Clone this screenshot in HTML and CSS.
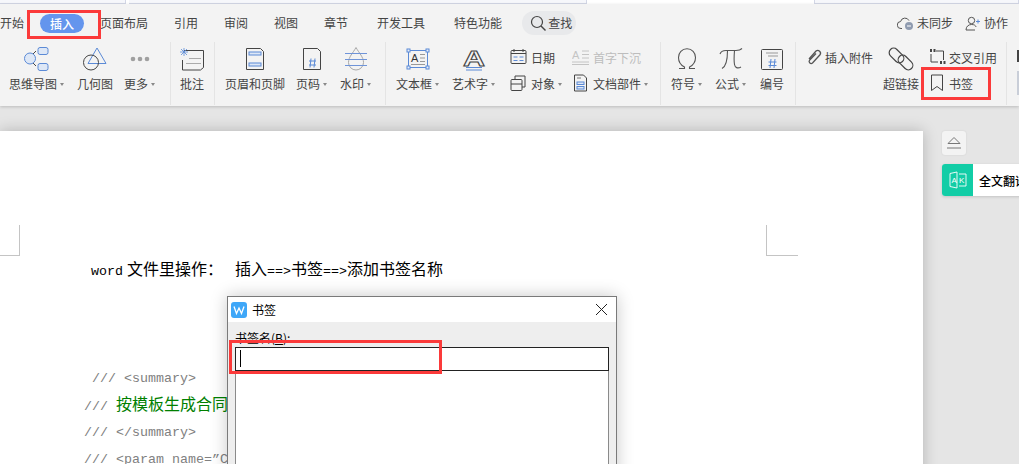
FILE: index.html
```html
<!DOCTYPE html>
<html lang="zh-CN">
  <head>
    <meta charset="utf-8" />
    <title>书签</title>
    <link rel="stylesheet" href="styles.css">
  </head>
  <body>
    <div class="app">
      <!-- tira de pestañas de arriba -->
      <div class="strip">
        <div class="strip-tab strip-a"></div>
        <div class="strip-tab strip-b"></div>
        <div class="strip-tab strip-c"></div>
      </div>

      <div class="ribbon">
        <div class="tabs">
          <span>开始</span>
          <span class="tab-on">插入</span>
          <span>页面布局</span>
          <span>引用</span>
          <span>审阅</span>
          <span>视图</span>
          <span>章节</span>
          <span class="tab-wide">开发工具</span>
          <span class="tab-wide">特色功能</span>
          <span class="search">
            <svg width="18" height="18" viewBox="0 0 18 18"><circle cx="8" cy="8" r="5.5" fill="none" stroke="#444" stroke-width="1.2"/><path d="M12 12l4.5 4.5" stroke="#444" stroke-width="1.4"/></svg>
            查找
          </span>
          <div class="tabs-right">
            <span class="tool">
              <svg width="17" height="15" viewBox="0 0 17 15"><path d="M5 12.5H4A3.5 3.5 0 0 1 3.6 5.5 4.5 4.5 0 0 1 12 4.6" fill="none" stroke="#555"/><circle cx="12" cy="10" r="4" fill="#8f9bb0"/><path d="M10 10h4" stroke="#fff"/></svg>
              未同步
            </span>
            <span class="tool">
              <svg width="16" height="15" viewBox="0 0 16 15"><circle cx="6.5" cy="4.5" r="3.2" fill="none" stroke="#555"/><path d="M1 14c0-3.5 2.5-5.5 5.5-5.5s4 1 4.6 2.4M1 14h9" fill="none" stroke="#555"/><path d="M11 5.5h4M13 3.5v4" stroke="#5b8ad6"/></svg>
              协作
            </span>
          </div>
        </div>

        <div class="groups">
          <div class="group g-first">
            <div class="big">
              <svg class="ico" width="26" height="26" viewBox="0 0 26 26"><path d="M8 9l4-4M8 16l4 4" stroke="#444"/><circle cx="6" cy="12.5" r="5.5" fill="#dde7f6" stroke="#5b8ad6"/><rect x="14" y="1.5" width="10" height="7" rx="2" fill="#dde7f6" stroke="#5b8ad6"/><rect x="14" y="17.5" width="10" height="7" rx="2" fill="#dde7f6" stroke="#5b8ad6"/></svg>
              <span class="lbl">思维导图<i class="arrow"></i></span>
            </div>
            <div class="big shape-btn">
              <svg class="ico" width="26" height="26" viewBox="0 0 26 26"><path d="M15 2l9 15.5H6z" fill="none" stroke="#5b8ad6"/><circle cx="9" cy="16.5" r="7.5" fill="none" stroke="#444"/></svg>
              <span class="lbl">几何图</span>
            </div>
            <div class="big">
              <svg class="ico" width="26" height="26" viewBox="0 0 26 26"><g fill="#a0a0a0"><circle cx="6" cy="13" r="2.3"/><circle cx="13" cy="13" r="2.3"/><circle cx="20" cy="13" r="2.3"/></g></svg>
              <span class="lbl">更多<i class="arrow"></i></span>
            </div>
          </div>

          <div class="group g-note">
            <div class="big">
              <svg class="ico" width="26" height="26" viewBox="0 0 26 26"><path d="M5 4.5h19.5v17l-3 2.5H3.5V14" fill="none" stroke="#444"/><path d="M10 12.5h12M7 17.5h15" stroke="#aaa"/><path d="M5 2v8M1 6h8M2 3l6 6M8 3L2 9" stroke="#5b8ad6" stroke-width=".8"/></svg>
              <span class="lbl">批注</span>
            </div>
          </div>

          <div class="group g-head">
            <div class="big">
              <svg class="ico" width="26" height="26" viewBox="0 0 26 26"><path d="M4.5 2.5h14l3 3v18h-17z" fill="none" stroke="#444"/><rect x="7" y="6" width="12" height="3" fill="#dde7f6" stroke="#5b8ad6"/><rect x="7" y="17" width="12" height="3" fill="#dde7f6" stroke="#5b8ad6"/></svg>
              <span class="lbl">页眉和页脚</span>
            </div>
            <div class="big">
              <svg class="ico" width="26" height="26" viewBox="0 0 26 26"><path d="M4.5 2.5h14l3 3v18h-17z" fill="none" stroke="#444"/><path d="M10 15h7M10 19h7M12 12.5l-1 9M16 12.5l-1 9" stroke="#5b8ad6"/></svg>
              <span class="lbl">页码<i class="arrow"></i></span>
            </div>
            <div class="big water-btn">
              <svg class="ico" width="26" height="26" viewBox="0 0 26 26"><path d="M13 1.5C10 7 5.5 11 5.5 16.5a7.5 7.5 0 0 0 15 0C20.500 11 16 7 13 1.5z" fill="none" stroke="#a8a8a8"/><path d="M2 7.500h22M2 13.500h22M2 19.500h22" stroke="#6f94d8"/></svg>
              <span class="lbl">水印<i class="arrow"></i></span>
            </div>
          </div>

          <div class="group g-text">
            <div class="big">
              <svg class="ico" width="26" height="26" viewBox="0 0 26 26"><rect x="3.500" y="4.500" width="19" height="17" fill="none" stroke="#5b8ad6"/><g fill="#e8eef9" stroke="#5b8ad6"><rect x="2" y="3" width="3" height="3"/><rect x="21" y="3" width="3" height="3"/><rect x="2" y="20" width="3" height="3"/><rect x="21" y="20" width="3" height="3"/></g><text x="6" y="16" class="svg-a">A</text><path d="M15 8.500h5M15 12h5M15 15.500h5M6 18.500h14" stroke="#999"/></svg>
              <span class="lbl">文本框<i class="arrow"></i></span>
            </div>
            <div class="big">
              <svg class="ico" width="26" height="26" viewBox="0 0 26 26"><text x="2" y="20" class="svg-art" textLength="22" lengthAdjust="spacingAndGlyphs">A</text><path d="M5 21.500h16M5 24h16" stroke="#5b8ad6"/></svg>
              <span class="lbl">艺术字<i class="arrow"></i></span>
            </div>
            <div class="small-grid">
              <div class="small">
                <svg width="20" height="18" viewBox="0 0 20 18"><rect x="1" y="2.500" width="15" height="13" rx="1" fill="none" stroke="#444"/><path d="M4 1v3M13 1v3M1 5.500h15" stroke="#444"/><path d="M3.500 9h4M9.500 9h4M3.500 12.500h4M9.500 12.500h4" stroke="#5b8ad6"/></svg>
                日期
              </div>
              <div class="small off">
                <svg width="20" height="18" viewBox="0 0 20 18"><text x="0" y="11" class="svg-off">A</text><path d="M10 3h7M10 6.500h7M10 10h7M0 14h17M0 16.500h17" stroke="#c4c4c4"/></svg>
                首字下沉
              </div>
              <div class="small">
                <svg width="20" height="18" viewBox="0 0 20 18"><path d="M5 5V2h10v11h-3" fill="none" stroke="#444"/><rect x="1" y="5.500" width="11" height="11" rx="1" fill="none" stroke="#444"/><path d="M1 10h11" stroke="#444"/></svg>
                <span>对象<i class="arrow"></i></span>
              </div>
              <div class="small">
                <svg width="20" height="18" viewBox="0 0 20 18"><path d="M2.500 1h9l3 3v13h-12z" fill="none" stroke="#444"/><rect x="5" y="8" width="7" height="2.500" fill="#dde7f6" stroke="#5b8ad6"/><rect x="5" y="12.500" width="7" height="2.500" fill="#dde7f6" stroke="#5b8ad6"/><path d="M5 4h4" stroke="#777"/></svg>
                <span>文档部件<i class="arrow"></i></span>
              </div>
            </div>
          </div>

          <div class="group g-sym">
            <div class="big">
              <svg class="ico" width="26" height="26" viewBox="0 0 26 26"><path d="M5 22.500h5.500v-1.500C6.500 19 4.500 15.500 4.500 11.500 4.500 6.500 8 2.800 13 2.800s8.500 3.700 8.500 8.700c0 4-2 7.500-6 9.500v1.500H21" fill="none" stroke="#555" stroke-width="1.100"/></svg>
              <span class="lbl">符号<i class="arrow"></i></span>
            </div>
            <div class="big">
              <svg class="ico ico-pi" width="26" height="26" viewBox="0 0 26 26"><path d="M2 8C3 5 5 4.500 8 4.500h10c2.500 0 4.500-.5 6-2M9.500 4.500C9.500 12 9 20 4 22.500M16.500 4.500c-.5 6-.5 11 0 14 .5 3 3 4.500 6.500 2.500" fill="none" stroke="#555" stroke-width="1.100"/></svg>
              <span class="lbl">公式<i class="arrow"></i></span>
            </div>
            <div class="big">
              <svg class="ico" width="26" height="26" viewBox="0 0 26 26"><rect x="2.500" y="3.500" width="21" height="20" rx="1" fill="none" stroke="#444"/><path d="M7 7h12M9 10h10" stroke="#999"/><path d="M9.500 16h8M9.500 19.500h8M12 13l-1 9M16 13l-1 9" stroke="#5b8ad6"/></svg>
              <span class="lbl">编号</span>
            </div>
          </div>

          <div class="group g-link">
            <div class="small attach">
              <svg width="20" height="18" viewBox="0 0 20 18"><path d="M4 11l7-8a2.800 2.800 0 0 1 4 3.800L7.500 15a2 2 0 0 1-3-2.600L11 5.500" fill="none" stroke="#555" stroke-width="1.300"/></svg>
              插入附件
            </div>
            <div class="big">
              <svg class="ico" width="26" height="26" viewBox="0 0 26 26"><g fill="none" stroke="#444" stroke-width="1.200"><rect x="0" y="5" width="17" height="9" rx="4.500" transform="rotate(45 8.500 9.500)"/><rect x="9" y="12" width="17" height="9" rx="4.500" transform="rotate(45 17.500 16.500)"/></g></svg>
              <span class="lbl">超链接</span>
            </div>
            <div class="link-col">
              <div class="small">
                <svg width="20" height="18" viewBox="0 0 20 18"><path d="M7 3h7.500v9M9 14H2V6" fill="none" stroke="#444"/><path d="M1 1h2v3H1zM4.500 1h2v3h-2zM11 13h2v3h-2zM14.500 13h2v3h-2z" fill="#444"/></svg>
                交叉引用
              </div>
              <div class="small">
                <svg width="20" height="18" viewBox="0 0 20 18"><path d="M2.500 1h11v15.500l-5.500-4-5.500 4z" fill="none" stroke="#444"/></svg>
                书签
              </div>
            </div>
          </div>

          <div class="group g-end">
            <i class="end-a"></i>
            <i class="end-b"></i>
          </div>
        </div>
      </div>

      <div class="workspace">
        <div class="page">
          <div class="marks">
            <div class="mark-left"></div>
            <div class="mark-right"></div>
          </div>
          <p class="line line-first"><span class="mono word">word</span>文件里操作：<span class="space"></span>插入<span class="mono">==&gt;</span>书签<span class="mono">==&gt;</span>添加书签名称</p>
          <p class="line code code-first mono">/// &lt;summary&gt;</p>
          <p class="line code code-green"><span class="mono">/// </span><span class="green">按模板生成合同</span></p>
          <p class="line code mono">/// &lt;/summary&gt;</p>
          <p class="line code mono">/// &lt;param name=”C</p>
        </div>
        <div class="side">
          <div class="collapse">
            <svg width="18" height="14" viewBox="0 0 18 14"><path d="M3 7.500L9 1.500l6 6z" fill="none" stroke="#777"/><path d="M2 12h14" stroke="#777"/></svg>
          </div>
          <div class="translate">
            <div class="translate-ico">
              <svg width="18" height="18" viewBox="0 0 18 18"><g fill="none" stroke="#fff" stroke-width=".9"><path d="M1 2.500l7-1.500v16l-7-1.500zM10 3h7v12h-7"/></g><text x="2.500" y="12" class="svg-tr">A</text><text x="10" y="12" class="svg-tr">K</text></svg>
            </div>
            <span>全文翻译</span>
          </div>
        </div>
      </div>

      <div class="dialog">
        <div class="dialog-title">
          <svg width="16" height="16" viewBox="0 0 16 16"><rect width="16" height="16" rx="3" fill="#3fa7f8"/><path d="M3 4.500l2.500 7L8 6l2.500 5.500 2.500-7" fill="none" stroke="#fff" stroke-width="1.300"/></svg>
          <span>书签</span>
          <svg class="dialog-close" width="13" height="13" viewBox="0 0 13 13"><path d="M1 1l11 11M12 1L1 12" stroke="#222"/></svg>
        </div>
        <div class="dialog-body">
          <div class="field-label">书签名(<u>B</u>):</div>
          <div class="field"><i class="caret"></i></div>
          <div class="list"></div>
        </div>
      </div>

      <!-- recuadros rojos de la captura -->
      <div class="red red-tab"></div>
      <div class="red red-mark"></div>
      <div class="red red-field"></div>
    </div>
  </body>
</html>
```

FILE: styles.css
```css
html,
body {
  margin: 0;
  height: 100%;
}
body {
  font-family: "Noto Sans CJK SC", "Liberation Sans", sans-serif;
  font-size: 12px;
  color: #444;
  background: #e5e5e5;
  overflow: hidden;
}
.app {
  position: relative;
  width: 1019px;
  height: 464px;
  overflow: hidden;
  display: flex;
  flex-direction: column;
}

/* tira superior */
.strip {
  height: 4px;
  display: flex;
  background: #fff;
  flex: none;
}
.strip-tab {
  background: #f6f7fb;
  border-bottom: 1px solid #d3d7e6;
  border-right: 1px solid #d3d7e6;
  height: 3px;
}
.strip-a {
  width: 125px;
}
.strip-b {
  width: 459px;
  margin-left: 3px;
}
.strip-c {
  width: 204px;
  margin-left: 227px;
  border-left: 1px solid #d3d7e6;
}

/* cinta */
.ribbon {
  flex: none;
  height: 102px;
  background: #f3f3f3;
  box-shadow: 0 1px 3px rgba(0, 0, 0, 0.18);
  position: relative;
  z-index: 2;
}
.tabs {
  height: 38px;
  display: flex;
  align-items: center;
  gap: 26px;
  font-size: 12px;
  line-height: 16px;
}
.tab-on {
  width: 44px;
  height: 19px;
  line-height: 19px;
  margin: 0 -10px;
  border-radius: 10px;
  background: #6495ed;
  color: #fff;
  text-align: center;
  font-weight: 500;
}
.tab-wide {
  margin-left: 3px;
}
.search {
  display: flex;
  align-items: center;
  width: 54px;
  height: 24px;
  margin-left: -6px;
  padding-left: 7px;
  box-sizing: border-box;
  border-radius: 12px;
  background: #e8e9eb;
  gap: 1px;
}
.tabs-right {
  display: flex;
  gap: 12px;
  margin-left: auto;
  padding-right: 11px;
}
.tool {
  display: flex;
  align-items: center;
  gap: 3px;
}

.groups {
  display: flex;
  height: 63px;
}
.group {
  display: flex;
  gap: 12px;
  padding: 4px 9px 0 9px;
  border-right: 1px solid #e4e4e4;
  flex: none;
  box-sizing: border-box;
}
.g-first {
  width: 171px;
}
.shape-btn {
  margin-left: 1px;
  margin-right: -1px;
}
.g-note {
  padding-left: 8px;
}
.g-head {
  width: 171px;
  padding-left: 10px;
  gap: 11px;
}
.water-btn {
  margin-left: 2px;
}
.g-text {
  width: 275px;
  padding-left: 10px;
  gap: 13px;
}
.g-sym {
  width: 135px;
  padding-left: 10px;
  gap: 13px;
}
.g-link {
  width: 211px;
  gap: 10px;
}
.g-end {
  border: 0;
  padding: 8px 0 0 10px;
  display: block;
}
.big {
  display: flex;
  flex-direction: column;
  align-items: center;
}
.ico {
  display: block;
  width: 26px;
  height: 26px;
  margin-bottom: 4px;
}
.lbl {
  line-height: 16px;
  white-space: nowrap;
}
.arrow {
  display: inline-block;
  width: 0;
  height: 0;
  margin-left: 3px;
  vertical-align: 3px;
  border-left: 2.5px solid transparent;
  border-right: 2.5px solid transparent;
  border-top: 3px solid #888;
}

.small-grid {
  display: grid;
  grid-template-columns: 62px auto;
  grid-auto-rows: 26px;
  margin: -2px 0 0 2px;
}
.link-col {
  display: grid;
  grid-auto-rows: 26px;
  margin-top: -2px;
}
.small {
  display: flex;
  align-items: center;
  gap: 1px;
  white-space: nowrap;
  height: 26px;
}
.small svg {
  flex: none;
  width: 20px;
}
.link-col .small {
  gap: 0;
}
.attach {
  margin-top: -2px;
  gap: 0;
}
.off {
  color: #bdbdbd;
}
.end-a {
  display: block;
  width: 2px;
  height: 12px;
  background: #444;
}
.end-b {
  display: block;
  width: 4px;
  height: 24px;
  margin-top: 9px;
  background: #c9ced8;
}

.svg-a {
  font: 11px "Liberation Sans", sans-serif;
  fill: #333;
}
.svg-art {
  font: bold 22px "Liberation Sans", sans-serif;
  fill: #f3f3f3;
  stroke: #444;
  stroke-width: 0.9;
}
.svg-off {
  font: 11px "Liberation Sans", sans-serif;
  fill: #c4c4c4;
}
.svg-tr {
  font: 8px "Liberation Sans", sans-serif;
  fill: #fff;
}

/* zona del documento */
.workspace {
  flex: 1;
  display: flex;
  min-height: 0;
  overflow: hidden;
  background: #e5e5e5;
}
.page {
  flex: none;
  width: 923px;
  height: 400px;
  margin-top: 25px;
  padding-top: 94px;
  box-sizing: border-box;
  background: #fff;
  color: #000;
  box-shadow: 0 0 14px rgba(0, 0, 0, 0.22);
}
.marks {
  display: flex;
  justify-content: space-between;
  height: 31px;
  box-sizing: border-box;
}
.mark-left {
  width: 19px;
  border-right: 1px solid #c4c4c4;
  border-bottom: 1px solid #c4c4c4;
}
.mark-right {
  width: 31px;
  margin-right: 125px;
  border-left: 1px solid #c4c4c4;
  border-bottom: 1px solid #c4c4c4;
}
.line {
  margin: 0;
  font-size: 16px;
  line-height: 27px;
  height: 27px;
  white-space: pre;
}
.line-first {
  padding-left: 91px;
  margin-top: -1px;
}
.mono {
  font-family: "Liberation Mono", monospace;
  font-size: 13.33px;
}
.word {
  margin-right: 4px;
}
.space {
  display: inline-block;
  width: 12px;
}
.code {
  padding-left: 84px;
  color: #808080;
}
.code-first {
  margin-top: 83px;
  padding-left: 92px;
}
.code-green {
  margin-top: -2px;
  margin-bottom: 2px;
}
.green {
  color: #008000;
}

.side {
  flex: 1;
  min-width: 0;
  padding: 25px 0 0 19px;
  overflow: hidden;
}
.collapse {
  width: 24px;
  height: 24px;
  border-radius: 3px;
  background: #f3f3f3;
  display: flex;
  align-items: center;
  justify-content: center;
  box-shadow: 0 0 2px rgba(0, 0, 0, 0.1);
}
.translate {
  display: flex;
  align-items: center;
  width: 100px;
  height: 32px;
  margin-top: 9px;
  background: #fff;
  border-radius: 3px;
  color: #000;
  font-weight: 500;
  box-shadow: 0 1px 3px rgba(0, 0, 0, 0.15);
  white-space: nowrap;
}
.translate-ico {
  flex: none;
  width: 31px;
  height: 32px;
  margin-right: 6px;
  background: #12cda6;
  border-radius: 3px 0 0 3px;
  display: flex;
  align-items: center;
  justify-content: center;
}

/* cuadro de dialogo */
.dialog {
  position: absolute;
  left: 227px;
  top: 296px;
  width: 390px;
  height: 200px;
  box-sizing: border-box;
  border: 1px solid #7a7a7a;
  background: #eee;
  color: #000;
  box-shadow: 0 0 16px rgba(0, 0, 0, 0.22);
  z-index: 3;
}
.dialog-title {
  height: 25px;
  background: #fff;
  display: flex;
  align-items: center;
  gap: 5px;
  padding: 0 8px 0 3px;
}
.dialog-close {
  margin-left: auto;
}
.dialog-body {
  padding: 8px 7px 0;
}
.field-label {
  line-height: 16px;
  margin-bottom: 1px;
}
.field {
  height: 24px;
  box-sizing: border-box;
  border: 1px solid #222;
  background: #fff;
  padding: 2px 4px;
}
.caret {
  display: block;
  width: 1px;
  height: 17px;
  background: #000;
}
.list {
  height: 130px;
  background: #fff;
  border: 1px solid #8a8a8a;
  border-top: 0;
}

/* recuadros rojos */
.red {
  position: absolute;
  box-sizing: border-box;
  border: 3px solid #fb3a3a;
  z-index: 4;
}
.red-tab {
  left: 27px;
  top: 10px;
  width: 74px;
  height: 29px;
}
.red-mark {
  left: 921px;
  top: 67px;
  width: 70px;
  height: 33px;
}
.red-field {
  left: 229px;
  top: 340px;
  width: 213px;
  height: 34px;
}
```
